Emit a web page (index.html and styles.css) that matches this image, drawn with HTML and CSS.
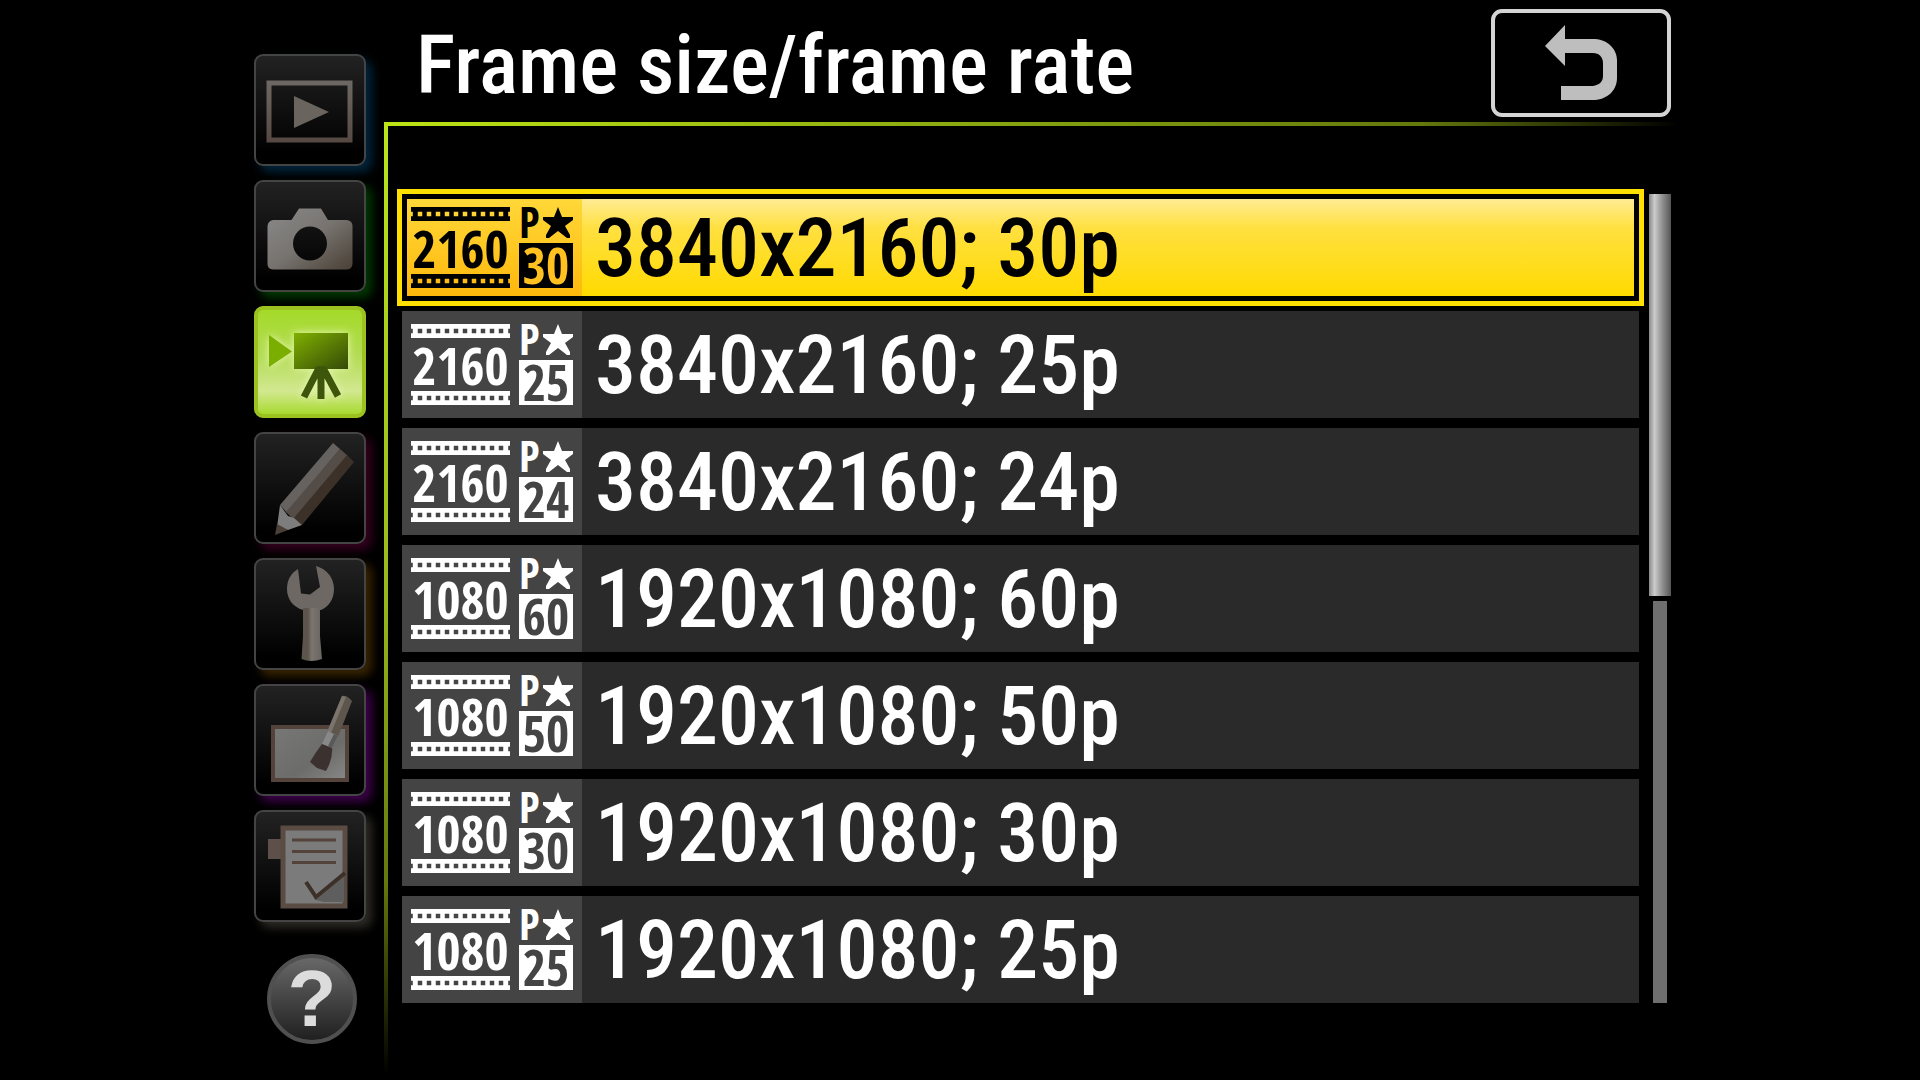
FILE: index.html
```html
<!DOCTYPE html>
<html lang="en">
<head>
    <meta charset="UTF-8">
    <meta name="viewport" content="width=device-width, initial-scale=1.0">
    <title>Frame size/frame rate</title>
    <link rel="stylesheet" href="styles.css">
</head>
<body>
    <!-- shared shapes -->
    <svg class="defs" aria-hidden="true">
        <defs>
            <linearGradient id="metal" x1="0" y1="0" x2="1" y2="1">
                <stop offset="0" stop-color="#8a8a8a"/>
                <stop offset="0.5" stop-color="#77736f"/>
                <stop offset="1" stop-color="#4a4036"/>
            </linearGradient>
            <linearGradient id="frame" x1="0" y1="0" x2="0" y2="1">
                <stop offset="0" stop-color="#6c6763"/>
                <stop offset="1" stop-color="#574a44"/>
            </linearGradient>
            <linearGradient id="movie" x1="0" y1="0" x2="1" y2="1">
                <stop offset="0" stop-color="#80b000"/>
                <stop offset="1" stop-color="#344a08"/>
            </linearGradient>
            <linearGradient id="handle" x1="0" y1="0" x2="1" y2="0">
                <stop offset="0" stop-color="#5c554c"/>
                <stop offset="0.3" stop-color="#5c554c"/>
                <stop offset="0.5" stop-color="#7a756f"/>
                <stop offset="1" stop-color="#69645f"/>
            </linearGradient>
            <linearGradient id="canvas" x1="0" y1="0" x2="1" y2="1">
                <stop offset="0" stop-color="#777"/>
                <stop offset="0.6" stop-color="#6c6c6a"/>
                <stop offset="1" stop-color="#888"/>
            </linearGradient>
            <symbol id="strip" viewBox="0 0 22 3" preserveAspectRatio="none">
                <path fill="currentColor" fill-rule="evenodd" d="M0 0H22V1H21.600V2H22V3H0V2H.4V1H0ZM1.500 1V2H2.500V1ZM3.500 1V2H4.500V1ZM5.500 1V2H6.500V1ZM7.500 1V2H8.500V1ZM9.500 1V2H10.500V1ZM11.500 1V2H12.500V1ZM13.500 1V2H14.500V1ZM15.500 1V2H16.500V1ZM17.500 1V2H18.500V1ZM19.500 1V2H20.500V1Z"/>
            </symbol>
            <symbol id="star" viewBox="0 0 30 31">
                <path fill="currentColor" d="M15 0 19 10H30V13L22 19 27 28V31H24L15 24 6 31H3V28L8 19 0 13V10H11Z"/>
            </symbol>
        </defs>
    </svg>

    <div class="screen">
        <nav class="tabs" aria-label="Menus">
            <button class="tab playback" aria-label="Playback menu">
                <svg viewBox="0 0 112 112">
                    <rect x="15" y="29" width="81" height="57" fill="none" stroke="url(#frame)" stroke-width="5"/>
                    <path d="M40 42 75 58 40 74Z" fill="#6a645f"/>
                </svg>
            </button>
            <button class="tab photo" aria-label="Photo shooting menu">
                <svg viewBox="0 0 112 112">
                    <path fill="url(#metal)" fill-rule="evenodd" d="M19 40H37.500L45 28.500H67L74 40H93Q98.500 41 98.500 46V84Q98 89 93 89.500H19Q13.500 89 13.500 84V46Q14 41 19 40ZM56 46.500A17 17 0 1 0 56 80.500A17 17 0 1 0 56 46.500Z"/>
                </svg>
            </button>
            <button class="tab movie active" aria-label="Movie shooting menu" aria-current="page">
                <svg viewBox="0 0 112 112">
                    <path d="M15 29 38 45.500 15 61Z" fill="#7aae00"/>
                    <rect x="40" y="27" width="54" height="36" fill="url(#movie)"/>
                    <path d="M65 62 50 91M67 60V93M69 62 84 90" fill="none" stroke="#3d560b" stroke-width="7"/>
                </svg>
            </button>
            <button class="tab custom" aria-label="Custom setting menu">
                <svg viewBox="0 0 112 112">
                    <path d="M79 11 86 17 33 81 26 73Z" fill="#66625f"/>
                    <path d="M86 17 94 24 40 88 32 80Z" fill="#544d47"/>
                    <path d="M93 23 100 30 48 93 39 87Z" fill="#3c3128"/>
                    <path d="M26 73 31 80 34 84 40 86 48 93 34 98 23 95Z" fill="#7d7d7d"/>
                    <path d="M23 92 34 98 21 103Z" fill="#4a4038"/>
                </svg>
            </button>
            <button class="tab setup" aria-label="Setup menu">
                <svg viewBox="0 0 112 112">
                    <path d="M44 11 47 35.500 56 36.500 66 29 62 8C73 11 80 20 80 31C80 42 74 49 67 52H49C39 49 33 41 33 31C33 22 37 15 44 11Z" fill="#6d6863"/>
                    <path d="M49 50H66V78L68 101Q57 105 47.500 101L49 78Z" fill="url(#handle)"/>
                </svg>
            </button>
            <button class="tab retouch" aria-label="Retouch menu">
                <svg viewBox="0 0 112 112">
                    <rect x="19" y="43" width="74" height="53" fill="url(#canvas)" stroke="#54433a" stroke-width="4"/>
                    <path d="M88 12Q93 11 98 17L84 53 73 48Z" fill="#5e564c"/>
                    <path d="M88 12 92 13 77 49 73 48Z" fill="#7a746d"/>
                    <path d="M74 47 84 52 78 64 68 60Z" fill="#888"/>
                    <path d="M80 50 84 52 78 64 74 62Z" fill="#595959"/>
                    <path d="M68 60 78 64Q79 75 72 87L63 84 56 78Q61 69 68 60Z" fill="#3b3230"/>
                </svg>
            </button>
            <button class="tab mymenu" aria-label="My menu">
                <svg viewBox="0 0 112 112">
                    <rect x="14" y="29" width="14" height="20" fill="#5d504a"/>
                    <rect x="29" y="18" width="62" height="78" fill="#7b7b7b" stroke="#5a4b43" stroke-width="5"/>
                    <path d="M38 30H82M38 41.500H82M38 52.500H82" stroke="#54433a" stroke-width="3"/>
                    <path d="M62 90 90 66V92H70Z" fill="#5e5e5e"/>
                    <path d="M52 72 62 87 91 63" fill="none" stroke="#3c3028" stroke-width="4"/>
                </svg>
            </button>
            <button class="help" aria-label="Help">?</button>
        </nav>

        <main class="panel">
            <header class="panel-header">
                <h1>Frame size/frame rate</h1>
                <button class="back" aria-label="Back">
                    <svg viewBox="0 0 72 76">
                        <path d="M0 21 20 0V14H50C64 15 72 25 72 35V53C72 65 63 74 50 75H16V61H48C54 60 58 57 58 51V38C58 32 54 28 48 28H20V41Z" fill="#bebebe"/>
                    </svg>
                </button>
            </header>

            <div class="list-area">
                <ul class="options">
                    <li>
                        <button class="option selected">
                            <span class="mode">
                                <span class="film"><svg class="strip"><use href="#strip"/></svg><b>2160</b><svg class="strip"><use href="#strip"/></svg></span>
                                <span class="rate"><span class="scan"><b>P</b><svg class="star"><use href="#star"/></svg></span><b class="fps">30</b></span>
                            </span>
                            <span class="label">3840x2160; 30p</span>
                        </button>
                    </li>
                    <li>
                        <button class="option">
                            <span class="mode">
                                <span class="film"><svg class="strip"><use href="#strip"/></svg><b>2160</b><svg class="strip"><use href="#strip"/></svg></span>
                                <span class="rate"><span class="scan"><b>P</b><svg class="star"><use href="#star"/></svg></span><b class="fps">25</b></span>
                            </span>
                            <span class="label">3840x2160; 25p</span>
                        </button>
                    </li>
                    <li>
                        <button class="option">
                            <span class="mode">
                                <span class="film"><svg class="strip"><use href="#strip"/></svg><b>2160</b><svg class="strip"><use href="#strip"/></svg></span>
                                <span class="rate"><span class="scan"><b>P</b><svg class="star"><use href="#star"/></svg></span><b class="fps">24</b></span>
                            </span>
                            <span class="label">3840x2160; 24p</span>
                        </button>
                    </li>
                    <li>
                        <button class="option">
                            <span class="mode">
                                <span class="film"><svg class="strip"><use href="#strip"/></svg><b>1080</b><svg class="strip"><use href="#strip"/></svg></span>
                                <span class="rate"><span class="scan"><b>P</b><svg class="star"><use href="#star"/></svg></span><b class="fps">60</b></span>
                            </span>
                            <span class="label">1920x1080; 60p</span>
                        </button>
                    </li>
                    <li>
                        <button class="option">
                            <span class="mode">
                                <span class="film"><svg class="strip"><use href="#strip"/></svg><b>1080</b><svg class="strip"><use href="#strip"/></svg></span>
                                <span class="rate"><span class="scan"><b>P</b><svg class="star"><use href="#star"/></svg></span><b class="fps">50</b></span>
                            </span>
                            <span class="label">1920x1080; 50p</span>
                        </button>
                    </li>
                    <li>
                        <button class="option">
                            <span class="mode">
                                <span class="film"><svg class="strip"><use href="#strip"/></svg><b>1080</b><svg class="strip"><use href="#strip"/></svg></span>
                                <span class="rate"><span class="scan"><b>P</b><svg class="star"><use href="#star"/></svg></span><b class="fps">30</b></span>
                            </span>
                            <span class="label">1920x1080; 30p</span>
                        </button>
                    </li>
                    <li>
                        <button class="option">
                            <span class="mode">
                                <span class="film"><svg class="strip"><use href="#strip"/></svg><b>1080</b><svg class="strip"><use href="#strip"/></svg></span>
                                <span class="rate"><span class="scan"><b>P</b><svg class="star"><use href="#star"/></svg></span><b class="fps">25</b></span>
                            </span>
                            <span class="label">1920x1080; 25p</span>
                        </button>
                    </li>
                </ul>
                <div class="scrollbar">
                    <div class="thumb"></div>
                    <div class="track"></div>
                </div>
            </div>
        </main>
    </div>
</body>
</html>
```
FILE: styles.css
```css
* {
    margin: 0;
    padding: 0;
    box-sizing: border-box;
}

body {
    background: #000;
    color: #fff;
    font-family: "Roboto Condensed", "Open Sans Condensed", sans-serif;
}

button {
    font: inherit;
    color: inherit;
    background: none;
    border: none;
    cursor: pointer;
}

.defs {
    display: block;
    width: 0;
    height: 0;
}

.screen {
    display: flex;
    width: 75%;
    min-height: 100vh;
    margin: 0 auto;
}

/* Menu tabs */
.tabs {
    display: flex;
    flex-direction: column;
    align-items: center;
    gap: 14px;
    flex: none;
    padding: 54px 18px 0 14px;
}

.tab {
    width: 112px;
    height: 112px;
    border: 2px solid #444;
    border-radius: 9px;
    background: linear-gradient(#222, #000 90%);
}

.tab svg {
    display: block;
    width: 112px;
    height: 112px;
    margin: -2px;
}

.playback {
    box-shadow: 6px 6px 10px #00253c;
}

.photo {
    box-shadow: 6px 6px 10px #003800;
}

.custom {
    box-shadow: 6px 6px 10px #34001e;
}

.setup {
    box-shadow: 6px 6px 10px #382400;
}

.retouch {
    box-shadow: 6px 6px 10px #3c0048;
}

.mymenu {
    box-shadow: 6px 6px 10px #2c2a24;
}

.tab.active {
    border: 4px solid #9cc220;
    background: linear-gradient(#a4da28, #b4dc58 45%, #d2e890 78%, #a8da30);
}

.tab.active svg {
    margin: -4px;
    filter: drop-shadow(0 0 4px #e8f8b0);
}

.help {
    width: 90px;
    height: 90px;
    margin: 18px 0 0 4px;
    border: 4px solid #505050;
    border-radius: 50%;
    background: linear-gradient(#686868, #202020);
    color: #dcdcdc;
    font-family: "Liberation Sans", sans-serif;
    font-size: 80px;
    font-weight: bold;
    line-height: 80px;
}

/* Panel with the fading green rule on its top and left */
.panel {
    flex: 1;
    min-width: 0;
    background:
        linear-gradient(to right, #bce414, #64780c 80%, transparent) 0 122px / 100% 4px no-repeat,
        linear-gradient(#bce41c, #98b81c 50%, #64780c 80%, transparent) 0 122px / 4px 952px no-repeat;
}

.panel-header {
    display: flex;
    justify-content: space-between;
    align-items: flex-start;
    height: 122px;
    padding: 9px 9px 0 32px;
}

h1 {
    font-size: 82px;
    font-weight: 500;
    line-height: 112px;
    white-space: nowrap;
}

.back {
    display: flex;
    justify-content: center;
    align-items: center;
    width: 180px;
    height: 108px;
    border: 4px solid #d4d4d4;
    border-radius: 11px;
}

.back svg {
    width: 72px;
    height: 76px;
}

.list-area {
    display: flex;
    gap: 10px;
    padding: 72px 9px 0 18px;
}

.options {
    display: flex;
    flex-direction: column;
    gap: 10px;
    flex: 1;
    list-style: none;
}

.option {
    display: flex;
    align-items: stretch;
    width: 100%;
    height: 107px;
    background: #2a2a2a;
    text-align: left;
}

.mode {
    display: flex;
    align-items: center;
    gap: 9px;
    width: 180px;
    padding-left: 9px;
    background: #444;
    font-family: "Open Sans Condensed", "Liberation Sans Narrow", sans-serif;
}

.label {
    align-self: center;
    padding-left: 13px;
    font-size: 82px;
    font-weight: 500;
    line-height: 100px;
    white-space: nowrap;
}

.option.selected {
    border: 5px solid #000;
    box-shadow: 0 0 0 5px #ffe000;
    background: linear-gradient(#ffec94, #ffe040 30%, #ffda00);
    color: #000;
}

.selected .mode {
    width: 175px;
    padding-left: 4px;
    background: linear-gradient(#ffd838, #ffb80c);
}

/* Film strip with the line count between its edges */
.film {
    display: flex;
    flex-direction: column;
    justify-content: space-between;
    width: 99px;
    height: 81px;
    text-align: center;
}

.film b {
    font-size: 52px;
    line-height: 50px;
}

.strip {
    display: block;
    width: 99px;
    height: 14px;
}

.rate {
    display: flex;
    flex-direction: column;
    justify-content: space-between;
    width: 54px;
    height: 81px;
}

.scan {
    display: flex;
    justify-content: space-between;
    height: 31px;
}

.scan b {
    font-size: 43px;
    line-height: 30px;
}

.star {
    width: 30px;
    height: 31px;
}

.fps {
    height: 45px;
    background: #fff;
    color: #444;
    font-size: 50px;
    line-height: 44px;
    text-align: center;
}

.selected .fps {
    background: #000;
    color: #ffc020;
}

/* Scroll position */
.scrollbar {
    display: flex;
    flex-direction: column;
    align-items: center;
    gap: 5px;
    width: 22px;
}

.thumb {
    flex: 1;
    width: 22px;
    background: linear-gradient(to right, #888, #ccc 25%, #999 55%, #555);
}

.track {
    flex: 1;
    width: 14px;
    background: #6e6e6e;
}
```
